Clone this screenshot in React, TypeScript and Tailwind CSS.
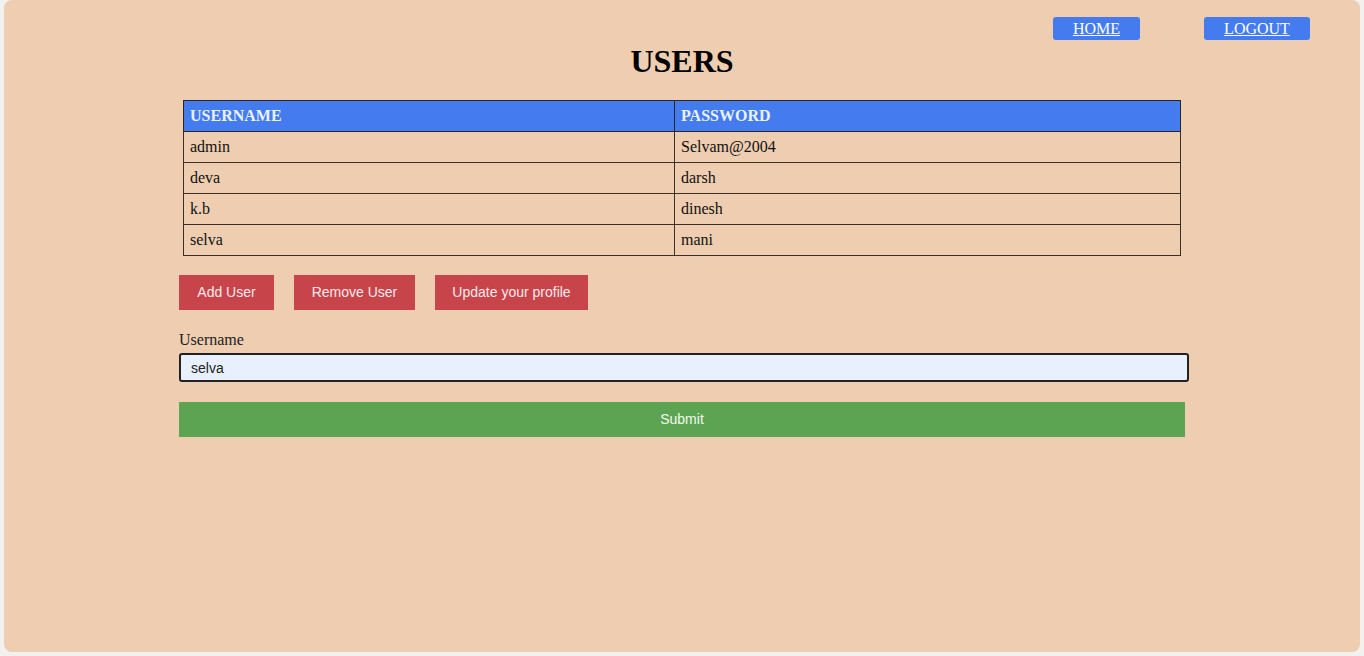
import React from 'react';

const users = [
  { username: 'admin', password: 'Selvam@2004' },
  { username: 'deva', password: 'darsh' },
  { username: 'k.b', password: 'dinesh' },
  { username: 'selva', password: 'mani' },
];

const serif = { fontFamily: '"Liberation Serif", "Times New Roman", serif' };
const sans = { fontFamily: '"Liberation Sans", Arial, sans-serif' };

const App: React.FC = () => {
  return (
    <div className="w-[1364px] h-[656px] bg-[#f3f1f0] px-[4px] pb-[4px]">
      <div className="h-full rounded-lg bg-[#eecdb0] flex flex-col" style={serif}>
        <div className="flex justify-end gap-[64px] pt-[17px] pr-[50px]">
          <a href="#" className="w-[87px] h-[23px] rounded-[3px] bg-[#447cf0] text-white text-[16px] leading-[23px] text-center underline">
            HOME
          </a>
          <a href="#" className="w-[106px] h-[23px] rounded-[3px] bg-[#447cf0] text-white text-[16px] leading-[23px] text-center underline">
            LOGOUT
          </a>
        </div>

        <h1 className="mt-[5px] text-[32px] leading-[32px] font-bold text-center text-black">USERS</h1>

        <div className="w-[1006px] mx-auto mt-[23px]">
          <table className="w-[998px] mx-auto border-collapse text-[16px] text-[#111]">
            <thead>
              <tr className="h-[31px] bg-[#447cf0] text-[#eaf1ff]">
                <th className="border border-[#2b2622] text-left font-bold pl-[6px] w-[491px]">USERNAME</th>
                <th className="border border-[#2b2622] text-left font-bold pl-[6px]">PASSWORD</th>
              </tr>
            </thead>
            <tbody>
              {users.map((u) => (
                <tr key={u.username} className="h-[31px]">
                  <td className="border border-[#3a302a] pl-[6px]">{u.username}</td>
                  <td className="border border-[#3a302a] pl-[6px]">{u.password}</td>
                </tr>
              ))}
            </tbody>
          </table>

          <div className="flex gap-[20px] mt-[19px]" style={sans}>
            <button className="w-[95px] h-[35px] bg-[#c8444b] text-[#fbe9ea] text-[14px]">Add User</button>
            <button className="w-[121px] h-[35px] bg-[#c8444b] text-[#fbe9ea] text-[14px]">Remove User</button>
            <button className="w-[153px] h-[35px] bg-[#c8444b] text-[#fbe9ea] text-[14px]">Update your profile</button>
          </div>

          <div className="mt-[21px] h-[18px] text-[16px] leading-[18px] text-[#222]">Username</div>
          <input
            readOnly
            value="selva"
            className="mt-[4px] w-[1010px] h-[29px] rounded-[3px] border-2 border-[#222] bg-[#e8f0fe] pl-[10px] text-[14px] text-[#222] outline-none"
            style={sans}
          />

          <button className="mt-[20px] w-[1006px] h-[35px] bg-[#5da452] text-[#f0faee] text-[14px] block" style={sans}>
            Submit
          </button>
        </div>
      </div>
    </div>
  );
};

export default App;
